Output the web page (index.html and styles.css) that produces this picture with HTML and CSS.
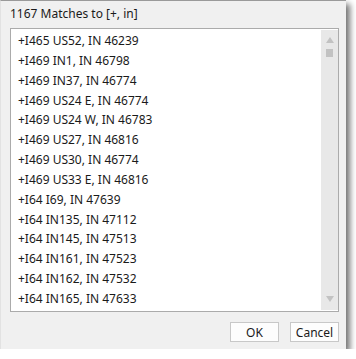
FILE: index.html
```html
<!DOCTYPE html>
<html lang="en">
<head>
    <meta charset="UTF-8">
    <title>Matches</title>
    <link rel="stylesheet" href="styles.css">
</head>
<body>
    <div class="dialog">
        <div class="dialog-title">1167 Matches to [+, in]</div>
        <div class="list-box">
            <div class="list-items">
                <div class="list-item">+I465 US52, IN 46239</div>
                <div class="list-item">+I469 IN1, IN 46798</div>
                <div class="list-item">+I469 IN37, IN 46774</div>
                <div class="list-item">+I469 US24 E, IN 46774</div>
                <div class="list-item">+I469 US24 W, IN 46783</div>
                <div class="list-item">+I469 US27, IN 46816</div>
                <div class="list-item">+I469 US30, IN 46774</div>
                <div class="list-item">+I469 US33 E, IN 46816</div>
                <div class="list-item">+I64 I69, IN 47639</div>
                <div class="list-item">+I64 IN135, IN 47112</div>
                <div class="list-item">+I64 IN145, IN 47513</div>
                <div class="list-item">+I64 IN161, IN 47523</div>
                <div class="list-item">+I64 IN162, IN 47532</div>
                <div class="list-item">+I64 IN165, IN 47633</div>
            </div>
            <!-- Scrollbar -->
            <div class="scrollbar">
                <div class="scroll-arrow up"></div>
                <div class="scroll-track">
                    <div class="scroll-thumb"></div>
                </div>
                <div class="scroll-arrow down"></div>
            </div>
        </div>
        <div class="button-row">
            <button class="button">OK</button>
            <button class="button">Cancel</button>
        </div>
    </div>
</body>
</html>
```

FILE: styles.css
```css
:root {
    --panel: #F0F0F0;
    --border: #ABABAB;
    --text: #1A1A1A;
    --scroll-bg: #E8E8E8;
    --scroll-fg: #C2C2C2;
}

* {
    margin: 0;
    padding: 0;
    box-sizing: border-box;
    font-family: "Noto Sans", "Open Sans", sans-serif;
}

body {
    background: #FFFFFF;
    color: var(--text);
}

.dialog {
    width: 346px;
    height: 349px;
    background: var(--panel);
    border-top: 1px solid #9A9A9A;
    border-left: 1px solid #E2E2E2;
    box-shadow: 4px 4px 6px rgba(0, 0, 0, 0.55);
    display: flex;
    flex-direction: column;
}

.dialog-title {
    font-size: 12px;
    height: 27px;
    line-height: 16px;
    padding: 5px 0 0 9px;
}

.list-box {
    height: 284px;
    margin: 0 7px 0 9px;
    border: 1px solid var(--border);
    background: #FFFFFF;
    display: flex;
}

.list-items {
    flex: 1;
    padding: 2px 0 0 7px;
    overflow: hidden;
}

.list-item {
    font-size: 12px;
    line-height: 20px;
    height: 19.85px;
    white-space: nowrap;
}

.scrollbar {
    width: 17px;
    margin: 1px 0;
    background: var(--scroll-bg);
    display: flex;
    flex-direction: column;
    align-items: center;
}

.scroll-arrow {
    width: 0;
    height: 0;
    border-left: 4px solid transparent;
    border-right: 4px solid transparent;
}

.scroll-arrow.up {
    margin-top: 7px;
    border-bottom: 6px solid var(--scroll-fg);
}

.scroll-arrow.down {
    margin-bottom: 8px;
    border-top: 6px solid var(--scroll-fg);
}

.scroll-track {
    flex: 1;
    width: 100%;
    display: flex;
    justify-content: center;
    padding-top: 6px;
}

.scroll-thumb {
    width: 7px;
    height: 8px;
    background: var(--scroll-fg);
}

.button-row {
    display: flex;
    justify-content: flex-end;
    gap: 11px;
    padding: 10px 7px 0 0;
}

.button {
    width: 49px;
    height: 20px;
    border: 1px solid #C8C8C8;
    background: #FDFDFD;
    font-size: 12px;
    color: var(--text);
}
```
